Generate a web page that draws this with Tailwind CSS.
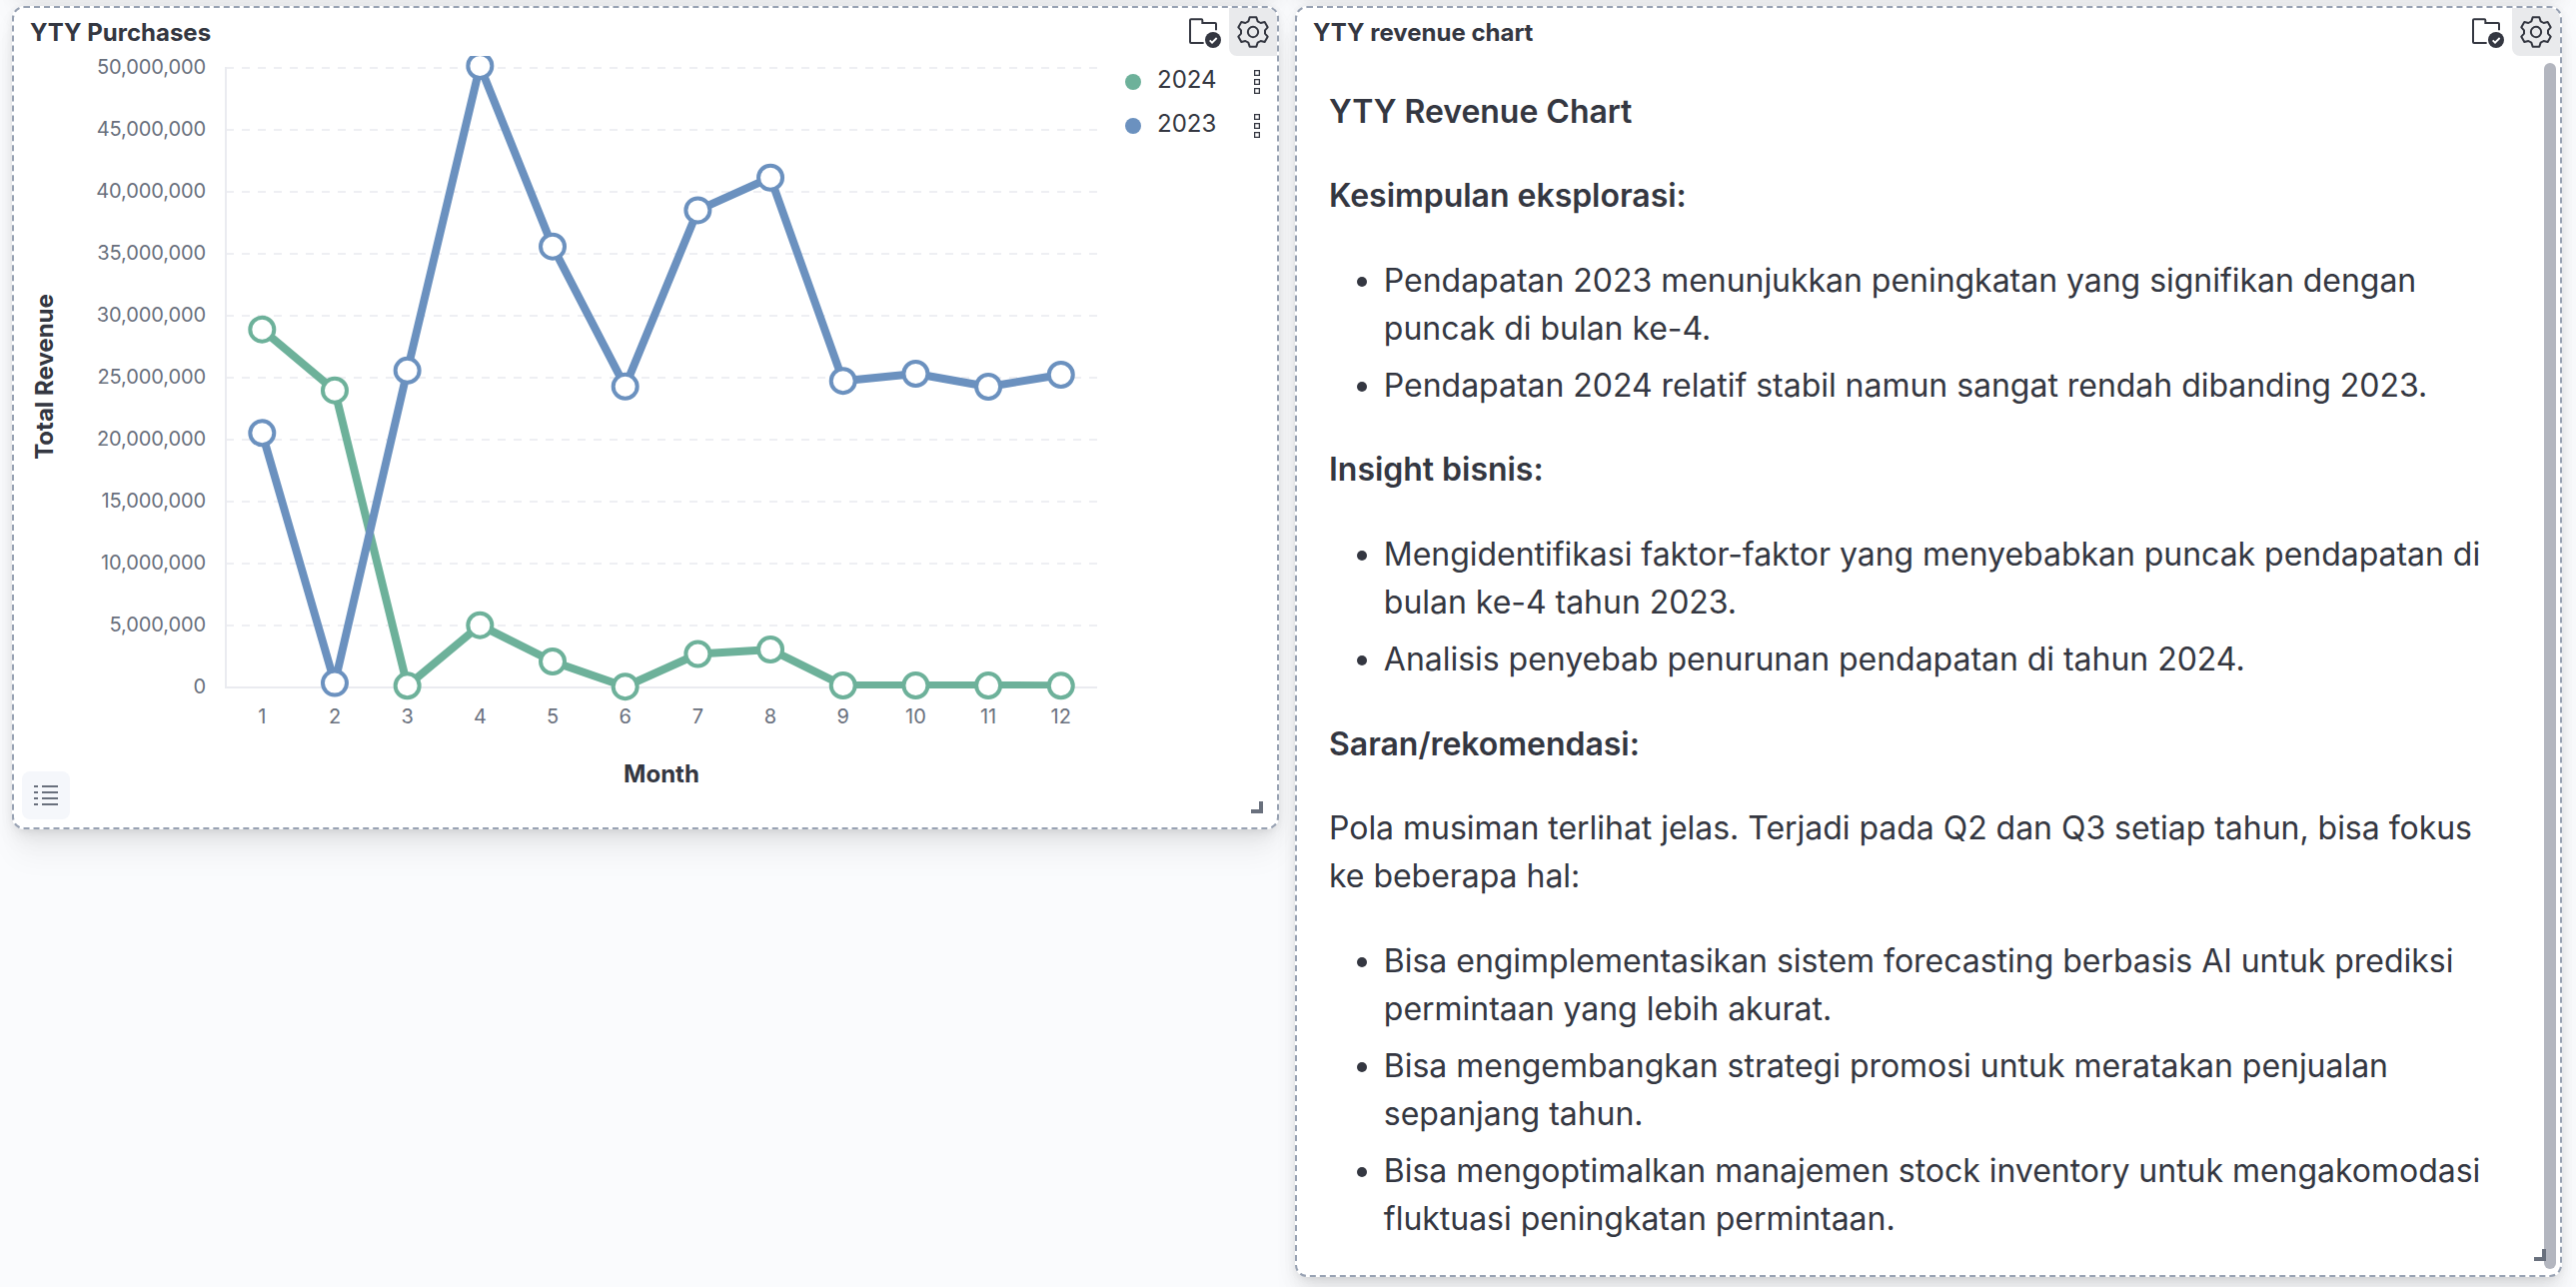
<!DOCTYPE html>
<html lang="id">
<head>
<meta charset="utf-8">
<title>YTY Dashboard</title>
<script src="https://cdn.jsdelivr.net/npm/@tailwindcss/browser@4"></script>
</head>
<body class="w-[2578px] h-[1288px] overflow-hidden bg-[#fafbfd] text-[#343741] font-['Inter',sans-serif]">
<svg class="hidden">
  <symbol id="gear" viewBox="0 0 96 96"><g fill="none" stroke="#343741" stroke-width="6" stroke-linejoin="round"><path d="M38 4H58L62 16L71 21L83 18L92 34L84 43V53L92 62L83 78L71 75L62 80L58 92H38L34 80L25 75L13 78L4 62L12 53V43L4 34L13 18L25 21L34 16Z"/><circle cx="48" cy="48" r="15.5"/></g></symbol>
  <symbol id="folder" viewBox="0 0 96 96"><path d="M81 43V24Q81 21 78 21H40V13Q40 10 37 10H6Q3 10 3 13V78Q3 81 6 81H44" fill="none" stroke="#343741" stroke-width="6"/><circle cx="72" cy="72" r="24" fill="#343741"/><path d="M62 73L69 80L83 66" fill="none" stroke="#fff" stroke-width="5.5"/></symbol>
  <symbol id="dots" viewBox="0 0 6 24"><path d="M.6 .6h4.8v4.8H.6zM.6 9.6h4.8v4.8H.6zM.6 18.6h4.8v4.8H.6z" fill="none" stroke="#343741" stroke-width="1.3"/></symbol>
</svg>
<main class="grid grid-cols-[1268px_1268px] gap-4 pl-3 -mt-[110px] items-start">
  <div class="h-[100px] rounded-xl bg-white shadow-[0_1.8px_8px_-2px_rgba(0,0,0,0.08),0_5.2px_16px_-2px_rgba(0,0,0,0.06),0_11.4px_24px_-2px_rgba(0,0,0,0.05),0_30px_30px_-2px_rgba(0,0,0,0.04)]"></div>
  <div class="h-[100px] rounded-xl bg-white shadow-[0_1.8px_8px_-2px_rgba(0,0,0,0.08),0_5.2px_16px_-2px_rgba(0,0,0,0.06),0_11.4px_24px_-2px_rgba(0,0,0,0.05),0_30px_30px_-2px_rgba(0,0,0,0.04)]"></div>

  <section class="relative h-[824px] flex flex-col rounded-xl border-2 border-dashed border-[#98a2b3] bg-white shadow-[0_1.8px_8px_-2px_rgba(0,0,0,0.08),0_5.2px_16px_-2px_rgba(0,0,0,0.06),0_11.4px_24px_-2px_rgba(0,0,0,0.05),0_30px_30px_-2px_rgba(0,0,0,0.04)]">
    <header class="h-12 flex items-center shrink-0">
      <h2 class="flex-1 pl-4 pt-0.5 text-2xl leading-9 font-bold">YTY Purchases</h2>
      <svg class="size-8 mr-2"><use href="#folder"/></svg>
      <div class="size-12 rounded-bl-lg rounded-tr-[10px] bg-[#e9eaec] grid place-items-center"><svg class="size-8"><use href="#gear"/></svg></div>
    </header>
    <div class="flex flex-1">
      <svg id="chart" class="w-[1104px] h-[764px] shrink-0" viewBox="14 56 1104 764" font-family="Inter, sans-serif"></svg>
      <ul class="flex-1 pt-1 text-2xl leading-9">
        <li class="h-11 flex items-center pl-2"><span class="size-4 rounded-full bg-[#6db19a]"></span><span class="pl-4 pb-1 flex-1">2024</span><svg class="w-1.5 h-6 mr-[17px]"><use href="#dots"/></svg></li>
        <li class="h-11 flex items-center pl-2"><span class="size-4 rounded-full bg-[#6b91bf]"></span><span class="pl-4 pb-1 flex-1">2023</span><svg class="w-1.5 h-6 mr-[17px]"><use href="#dots"/></svg></li>
      </ul>
    </div>
    <div class="absolute left-2 bottom-2 size-12 rounded-lg bg-[#f5f7fb] grid place-items-center">
      <svg class="w-6 h-5" viewBox="0 0 24 20"><path d="M0 1h4M8 1h16M0 7h4M8 7h16M0 13h4M8 13h16M0 19h4M8 19h16" stroke="#69707d" stroke-width="2"/></svg>
    </div>
    <div class="absolute right-3.5 bottom-3.5 size-3 border-r-4 border-b-4 border-[#69707d]"></div>
  </section>

  <section class="relative h-[1272px] rounded-xl border-2 border-dashed border-[#98a2b3] bg-white shadow-[0_1.8px_8px_-2px_rgba(0,0,0,0.08),0_5.2px_16px_-2px_rgba(0,0,0,0.06),0_11.4px_24px_-2px_rgba(0,0,0,0.05),0_30px_30px_-2px_rgba(0,0,0,0.04)]">
    <header class="h-12 flex items-center">
      <h2 class="flex-1 pl-4 pt-0.5 text-2xl leading-9 font-bold">YTY revenue chart</h2>
      <svg class="size-8 mr-2"><use href="#folder"/></svg>
      <div class="size-12 rounded-bl-lg rounded-tr-[10px] bg-[#e9eaec] grid place-items-center"><svg class="size-8"><use href="#gear"/></svg></div>
    </header>
    <article class="flex flex-col gap-[36.57px] pt-[31.5px] pl-8 text-[32px] leading-[48px] tracking-[-0.03px] whitespace-nowrap">
      <p class="font-semibold">YTY Revenue Chart</p>
      <p class="font-semibold">Kesimpulan eksplorasi:</p>
      <ul class="list-disc pl-[54.86px] flex flex-col gap-[9.14px]">
        <li>Pendapatan 2023 menunjukkan peningkatan yang signifikan dengan<br>puncak di bulan ke-4.</li>
        <li>Pendapatan 2024 relatif stabil namun sangat rendah dibanding 2023.</li>
      </ul>
      <p class="font-semibold">Insight bisnis:</p>
      <ul class="list-disc pl-[54.86px] flex flex-col gap-[9.14px]">
        <li>Mengidentifikasi faktor-faktor yang menyebabkan puncak pendapatan di<br>bulan ke-4 tahun 2023.</li>
        <li>Analisis penyebab penurunan pendapatan di tahun 2024.</li>
      </ul>
      <p class="font-semibold">Saran/rekomendasi:</p>
      <p>Pola musiman terlihat jelas. Terjadi pada Q2 dan Q3 setiap tahun, bisa fokus<br>ke beberapa hal:</p>
      <ul class="list-disc pl-[54.86px] flex flex-col gap-[9.14px]">
        <li>Bisa engimplementasikan sistem forecasting berbasis AI untuk prediksi<br>permintaan yang lebih akurat.</li>
        <li>Bisa mengembangkan strategi promosi untuk meratakan penjualan<br>sepanjang tahun.</li>
        <li>Bisa mengoptimalkan manajemen stock inventory untuk mengakomodasi<br>fluktuasi peningkatan permintaan.</li>
      </ul>
    </article>
    <div class="absolute right-1 top-[55px] bottom-1.5 w-3 rounded-full bg-[#b3b6bf]"></div>
    <div class="absolute right-3.5 bottom-3.5 size-3 border-r-4 border-b-4 border-[#69707d]"></div>
  </section>
</main>
<script>
const X = i => 262.3 + 72.68 * i;
const series = [
  ['#6db19a', [329.7,390.7,686.3,625.7,662,687.2,654.5,650,686,686,686,686.3]],
  ['#6b91bf', [433.3,683.6,370.8,66,246.7,386.8,210.4,177.7,381.2,374,387,375]]
];
let s = '<clipPath id="plot"><path d="M226 56H1098V689H226Z"/></clipPath>';
for (let k = 0; k <= 10; k++) {
  const y = 688 - 62 * k;
  if (k) s += `<path d="M226 ${y}H1098" stroke="#eeeff3" stroke-width="2" stroke-dasharray="8 8"/>`;
  s += `<text x="206" y="${y + 6}" font-size="20" letter-spacing="-0.1" fill="#69707d" text-anchor="end">${(k * 5e6).toLocaleString('en-US')}</text>`;
}
s += '<path d="M226 67V688H1098" fill="none" stroke="#eaebf0" stroke-width="2"/>';
for (const [c, ys] of series)
  s += `<path clip-path="url(#plot)" d="M${ys.map((y, i) => X(i) + ' ' + y).join('L')}" fill="none" stroke="${c}" stroke-width="8" stroke-linejoin="round"/>`
    + ys.map((y, i) => `<circle cx="${X(i)}" cy="${y}" r="12" fill="#fff" stroke="${c}" stroke-width="4"/>`).join('');
for (let i = 0; i < 12; i++) s += `<text x="${X(i)}" y="724" font-size="20" fill="#69707d" text-anchor="middle">${i + 1}</text>`;
s += '<text x="662" y="783" font-size="24" font-weight="700" fill="#343741" text-anchor="middle">Month</text>';
s += '<text transform="translate(53 377) rotate(-90)" font-size="24" font-weight="700" fill="#343741" text-anchor="middle">Total Revenue</text>';
document.getElementById('chart').innerHTML = s;
</script>
</body>
</html>
